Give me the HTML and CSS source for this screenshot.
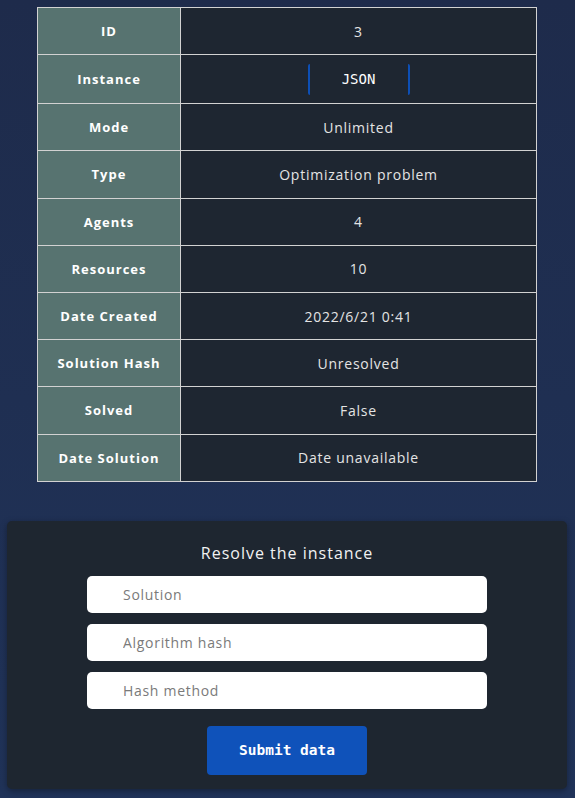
FILE: index.html
```html
<!DOCTYPE html>
<html lang="en">
<head>
<meta charset="utf-8">
<title>Instance</title>
<link rel="stylesheet" href="styles.css">
</head>
<body>
<main class="page">
  <table class="info">
    <tbody>
      <tr><th>ID</th><td>3</td></tr>
      <tr class="tall"><th>Instance</th><td><button class="json-btn" type="button">JSON</button></td></tr>
      <tr><th>Mode</th><td>Unlimited</td></tr>
      <tr><th>Type</th><td>Optimization problem</td></tr>
      <tr><th>Agents</th><td>4</td></tr>
      <tr><th>Resources</th><td>10</td></tr>
      <tr><th>Date Created</th><td>2022/6/21 0:41</td></tr>
      <tr><th>Solution Hash</th><td>Unresolved</td></tr>
      <tr><th>Solved</th><td>False</td></tr>
      <tr><th>Date Solution</th><td>Date unavailable</td></tr>
    </tbody>
  </table>

  <section class="panel">
    <h2 class="panel-title">Resolve the instance</h2>
    <form class="form">
      <input class="field" type="text" placeholder="Solution">
      <input class="field" type="text" placeholder="Algorithm hash">
      <input class="field" type="text" placeholder="Hash method">
      <button class="submit" type="button">Submit data</button>
    </form>
  </section>
</main>
</body>
</html>
```
FILE: styles.css
```css
html, body {
  margin: 0;
  padding: 0;
}
body {
  min-height: 798px;
  background: linear-gradient(180deg, #1e2b4b 0%, #203359 100%);
  font-family: "Open Sans", "DejaVu Sans", sans-serif;
  color: #e6e6e6;
}
.page {
  display: flex;
  flex-direction: column;
  align-items: center;
  padding: 7px 1px 0 0;
}
.info {
  width: 500px;
  border-collapse: collapse;
  border: 1px solid #d2d2d2;
}
.info th, .info td {
  border: 1px solid #d2d2d2;
  height: 46.2px;
  padding: 0;
  text-align: center;
  vertical-align: middle;
}
.info th {
  width: 142px;
  background: #577370;
  color: #ffffff;
  font-weight: 700;
  font-size: 13px;
  letter-spacing: 1px;
}
.info td {
  background: #1e2631;
  color: #e4e4e4;
  font-weight: 400;
  font-size: 14px;
  letter-spacing: 0.75px;
}
.info tr.tall th, .info tr.tall td {
  height: 48px;
}
.json-btn {
  width: 102px;
  height: 31px;
  background: transparent;
  border: none;
  border-left: 2px solid #0d4fb5;
  border-right: 2px solid #0d4fb5;
  border-radius: 2px;
  color: #ffffff;
  font-family: "DejaVu Sans Mono", monospace;
  font-size: 14px;
  letter-spacing: 0;
  cursor: pointer;
}
.panel {
  margin-top: 39px;
  width: 560px;
  box-sizing: border-box;
  background: #1e2630;
  border-radius: 5px;
  box-shadow: 0 2px 6px rgba(0, 0, 0, 0.35);
  padding: 22px 0 14px;
  display: flex;
  flex-direction: column;
  align-items: center;
}
.panel-title {
  margin: 0 0 13px;
  font-size: 16px;
  font-weight: 400;
  letter-spacing: 1px;
  color: #f2f2f2;
  line-height: 20px;
}
.form {
  display: flex;
  flex-direction: column;
  align-items: center;
  gap: 11px;
}
.field {
  width: 400px;
  height: 37px;
  box-sizing: border-box;
  border: none;
  border-radius: 5px;
  background: #ffffff;
  padding: 0 36px;
  font-family: "Open Sans", sans-serif;
  font-size: 14px;
  color: #333;
  outline: none;
}
.field::placeholder {
  color: #7a7a7a;
  letter-spacing: 0.7px;
}
.submit {
  margin-top: 6px;
  width: 160px;
  height: 49px;
  border: none;
  border-radius: 4px;
  background: #0f52ba;
  color: #ffffff;
  font-family: "DejaVu Sans Mono", monospace;
  font-size: 14.5px;
  font-weight: 700;
  cursor: pointer;
}
```
